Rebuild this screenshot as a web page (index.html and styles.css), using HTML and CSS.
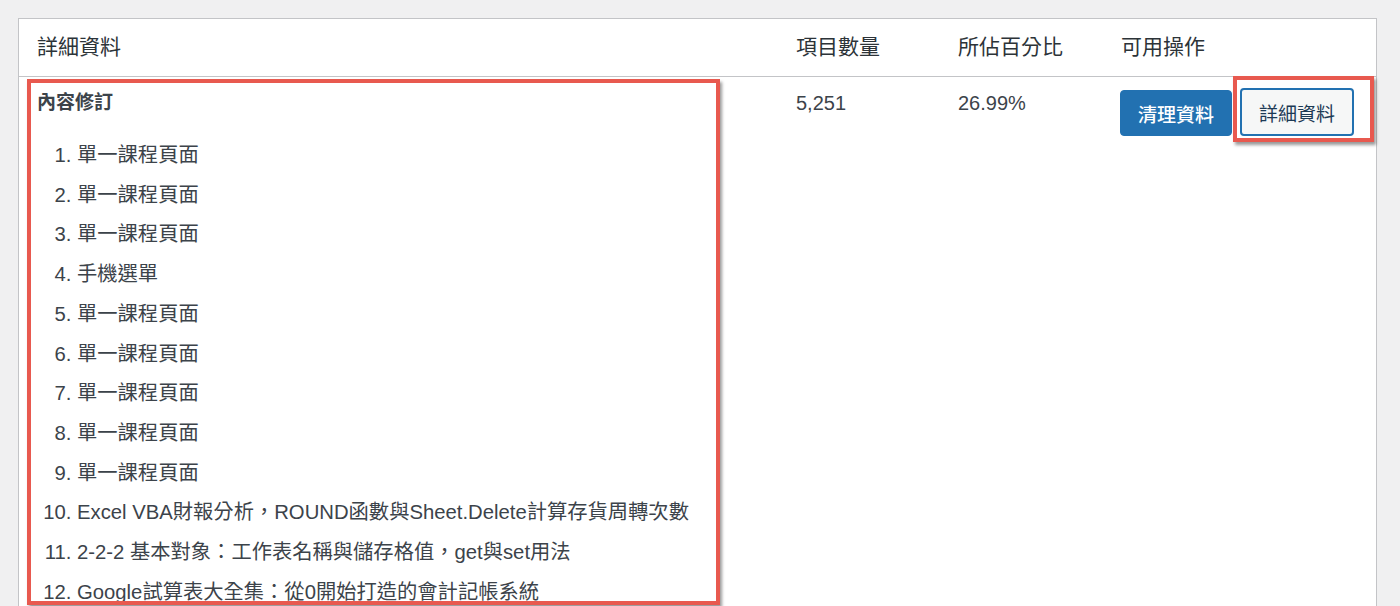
FILE: index.html
```html
<!DOCTYPE html>
<html lang="zh-Hant">
<head>
    <meta charset="UTF-8">
    <title>詳細資料</title>
    <link rel="stylesheet" href="styles.css">
</head>
<body>
    <div class="panel">
        <div class="grid head">
            <div class="cell">詳細資料</div>
            <div class="cell">項目數量</div>
            <div class="cell">所佔百分比</div>
            <div class="cell">可用操作</div>
        </div>
        <div class="grid row">
            <div class="cell detail">
                <strong class="title">內容修訂</strong>
                <ol class="items">
                    <li>單一課程頁面</li>
                    <li>單一課程頁面</li>
                    <li>單一課程頁面</li>
                    <li>手機選單</li>
                    <li>單一課程頁面</li>
                    <li>單一課程頁面</li>
                    <li>單一課程頁面</li>
                    <li>單一課程頁面</li>
                    <li>單一課程頁面</li>
                    <li>Excel VBA財報分析，ROUND函數與Sheet.Delete計算存貨周轉次數</li>
                    <li>2-2-2 基本對象：工作表名稱與儲存格值，get與set用法</li>
                    <li>Google試算表大全集：從0開始打造的會計記帳系統</li>
                </ol>
                <div class="mark mark-list"></div>
            </div>
            <div class="cell">5,251</div>
            <div class="cell">26.99%</div>
            <div class="cell actions">
                <button class="btn primary">清理資料</button>
                <span class="btn-wrap">
                    <button class="btn secondary">詳細資料</button>
                    <span class="mark mark-btn"></span>
                </span>
            </div>
        </div>
    </div>
</body>
</html>
```

FILE: styles.css
```css
html, body {
    margin: 0;
    height: 606px;
    overflow: hidden;
}
body {
    background: #f0f0f1;
    color: #3c434a;
    font-family: "Liberation Sans", "Noto Sans CJK TC", sans-serif;
    font-size: 20px;
    padding: 18px 0 0 18px;
    box-sizing: border-box;
}
.panel {
    width: 1359px;
    height: 700px;
    background: #fff;
    border: 1px solid #c3c4c7;
    box-sizing: border-box;
}
.grid {
    display: grid;
    grid-template-columns: 759px 162px 163px 1fr;
}
.head {
    border-bottom: 1px solid #c3c4c7;
    color: #2c3338;
    font-size: 21px;
}
.head .cell {
    padding: 14px 18px 15px;
    line-height: 28px;
}
.row .cell {
    padding: 12px 18px 0;
    line-height: 28px;
}
.detail {
    position: relative;
}
.title {
    display: block;
    font-size: 19px;
    font-weight: 700;
    color: #3c434a;
}
.items {
    margin: 19px 0 0;
    padding-left: 40px;
    font-size: 20.3px;
}
.items li {
    line-height: 39.7px;
}
.actions {
    display: flex;
    align-items: flex-start;
    gap: 8px;
    padding-left: 17px !important;
}
.btn {
    font-family: inherit;
    font-size: 19px;
    height: 48px;
    padding: 0 17px;
    border-radius: 4px;
    cursor: pointer;
}
.primary {
    background: #2271b1;
    border: 1px solid #2271b1;
    color: #fff;
    margin-top: 1px;
    height: 46px;
    font-weight: 500;
}
.secondary {
    background: #f6f7f7;
    border: 2px solid #2271b1;
    color: #1d3a55;
    box-shadow: 0 0 0 1px #fff;
}
.btn-wrap {
    position: relative;
    margin-top: -1px;
}
.mark {
    position: absolute;
    border: 4px solid #e8594f;
    box-shadow: 2px 3px 3px rgba(0, 0, 0, 0.4);
    pointer-events: none;
}
.mark-list {
    left: 8px;
    top: 2px;
    width: 685px;
    height: 518px;
}
.mark-btn {
    left: -7px;
    top: -12px;
    width: 133px;
    height: 58px;
}
```
